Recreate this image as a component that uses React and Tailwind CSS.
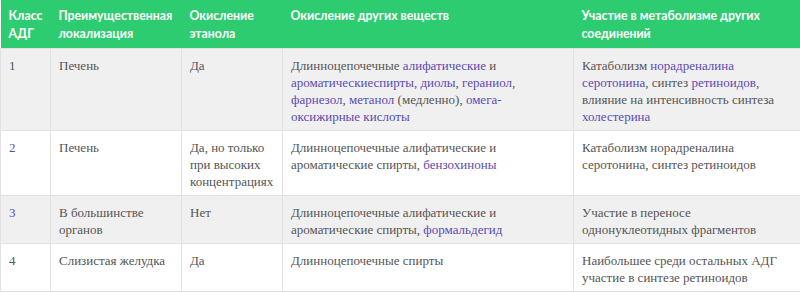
import React from 'react';

const L = ({ children }) => <span className="text-[#5b4bb0]">{children}</span>;

const rows = [
  {
    cls: '1',
    clsLink: false,
    place: 'Печень',
    ethanol: 'Да',
    other: (
      <>
        Длинноцепочечные <L>алифатические</L> и<br />
        <L>ароматические</L><L>спирты</L>, <L>диолы</L>, <L>гераниол</L>,<br />
        <L>фарнезол</L>, <L>метанол</L> (медленно), <L>омега-</L><br />
        <L>оксижирные кислоты</L>
      </>
    ),
    meta: (
      <>
        Катаболизм <L>норадреналина</L><br />
        <L>серотонина</L>, синтез <L>ретиноидов</L>,<br />
        влияние на интенсивность синтеза<br />
        <L>холестерина</L>
      </>
    )
  },
  {
    cls: '2',
    clsLink: true,
    place: 'Печень',
    ethanol: (
      <>
        Да, но только<br />при высоких<br />концентрациях
      </>
    ),
    other: (
      <>
        Длинноцепочечные алифатические и<br />
        ароматические спирты, <L>бензохиноны</L>
      </>
    ),
    meta: (
      <>
        Катаболизм норадреналина<br />серотонина, синтез ретиноидов
      </>
    )
  },
  {
    cls: '3',
    clsLink: true,
    place: (
      <>
        В большинстве<br />органов
      </>
    ),
    ethanol: 'Нет',
    other: (
      <>
        Длинноцепочечные алифатические и<br />
        ароматические спирты, <L>формальдегид</L>
      </>
    ),
    meta: (
      <>
        Участие в переносе<br />однонуклеотидных фрагментов
      </>
    )
  },
  {
    cls: '4',
    clsLink: false,
    place: 'Слизистая желудка',
    ethanol: 'Да',
    other: 'Длинноцепочечные спирты',
    meta: (
      <>
        Наибольшее среди остальных АДГ<br />участие в синтезе ретиноидов
      </>
    )
  }
];

export default function App() {
  return (
    <div className="w-[800px] h-[292px] bg-white overflow-hidden">
      <table className="w-[800px] table-fixed border-collapse">
        <colgroup>
          <col className="w-[50px]" />
          <col className="w-[131px]" />
          <col className="w-[101px]" />
          <col className="w-[291px]" />
          <col className="w-[227px]" />
        </colgroup>
        <thead>
          <tr className="bg-[#2ecc71] text-white text-left align-top font-['Lato',sans-serif] text-[12.3px] leading-[18px] font-bold">
            <th className="pl-2 pr-1 pt-[7px] pb-[5px] h-[48px]">Класс АДГ</th>
            <th className="pl-2 pr-1 pt-[7px] pb-[5px]">Преимущественная локализация</th>
            <th className="pl-2 pr-1 pt-[7px] pb-[5px]">Окисление этанола</th>
            <th className="pl-2 pr-1 pt-[7px] pb-[5px]">Окисление других веществ</th>
            <th className="pl-2 pr-1 pt-[7px] pb-[5px]">Участие в метаболизме других соединений</th>
          </tr>
        </thead>
        <tbody className="font-['Liberation_Serif',serif] text-[13px] leading-[17px] text-[#555]">
          {rows.map((r, i) => (
            <tr key={r.cls} className={`align-top ${i % 2 === 0 ? 'bg-[#f0f0f0]' : 'bg-white'}`}>
              <td className="border border-[#e2e2e2] pl-2 pr-1 pt-2 pb-[5px]">
                {r.clsLink ? <L>{r.cls}</L> : r.cls}
              </td>
              <td className="border border-[#e2e2e2] pl-2 pr-1 pt-2 pb-[5px]">{r.place}</td>
              <td className="border border-[#e2e2e2] pl-2 pr-1 pt-2 pb-[5px]">{r.ethanol}</td>
              <td className="border border-[#e2e2e2] pl-2 pr-1 pt-2 pb-[5px]">{r.other}</td>
              <td className="border border-[#e2e2e2] pl-2 pr-1 pt-2 pb-[5px]">{r.meta}</td>
            </tr>
          ))}
        </tbody>
      </table>
    </div>
  );
}
